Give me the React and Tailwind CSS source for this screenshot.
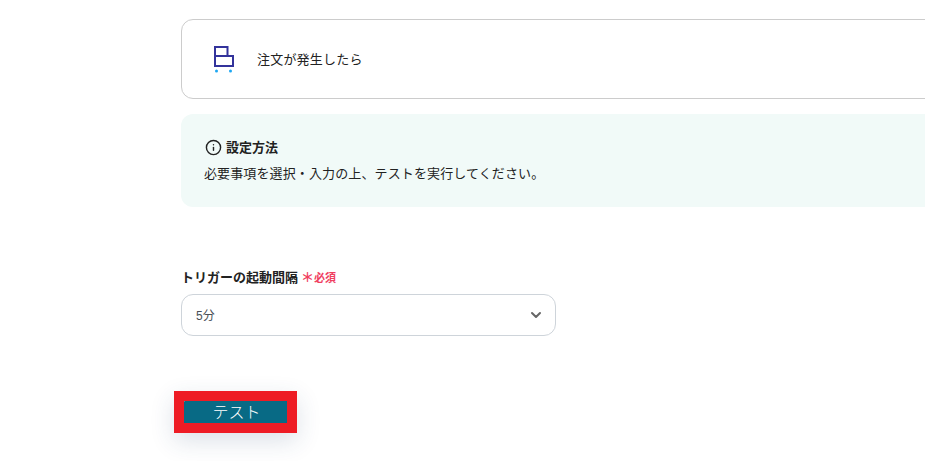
import { ChevronDown, Info } from 'lucide-react';

const font = { jp: 'font-["Liberation_Sans","Noto_Sans_CJK_JP",sans-serif]' };

const OrderIcon = () => (
  <svg width="20" height="28" viewBox="0 0 20 28" fill="none" className="shrink-0">
    <path d="M1 2H13.5V11H1Z" stroke="#33339b" strokeWidth="2" />
    <path d="M1 11H19V21H1Z" stroke="#33339b" strokeWidth="2" />
    <circle cx="2.5" cy="26" r="1.5" fill="#1ea7f2" />
    <circle cx="16.5" cy="26" r="1.5" fill="#1ea7f2" />
  </svg>
);

export default function App() {
  return (
    <div className={`${font.jp} h-[461px] w-[925px] overflow-hidden bg-white pl-[181px] pt-[19px] text-[13px] text-[#222222]`}>
      <div className="w-[1000px]">
        <div className="flex h-20 items-center gap-[23px] rounded-xl border border-[#cccccc] pl-[32px]">
          <OrderIcon />
          <span className="pt-[2px] tracking-[0.2px]">注文が発生したら</span>
        </div>

        <div className="mt-[15px] h-[93px] rounded-xl bg-[#f1faf8] pl-[23px] pt-[24px]">
          <div className="flex items-center gap-[4px] pl-[1px]">
            <Info size={17} strokeWidth={2} className="text-[#222222]" />
            <span className="font-bold">設定方法</span>
          </div>
          <p className="mt-[6px] tracking-[0.12px]">必要事項を選択・入力の上、テストを実行してください。</p>
        </div>

        <div className="mt-[60px] flex h-5 items-center pt-[2px]">
          <span className="font-bold">トリガーの起動間隔</span>
          <span className="ml-[3px] text-[13px] font-bold text-[#f0405f]">＊</span>
          <span className="text-[11px] font-bold text-[#f0405f]">必須</span>
        </div>

        <div className="mt-[7px] flex h-[42px] w-[375px] items-center justify-between rounded-xl border border-[#ced4da] pl-[14px] pr-[11px] text-xs text-[#495057]">
          <span className="pt-[2px]">5分</span>
          <ChevronDown size={16} strokeWidth={3} className="text-[#666666]" />
        </div>

        <div className="relative -ml-[7px] mt-[55px] h-[42px] w-[123px] border-10 border-[#ee1c25] bg-white shadow-[0_8px_24px_rgba(40,70,110,0.16)]">
          <button className="flex h-full w-full items-center justify-center rounded-tl-[1px] bg-[#086a85] pl-[2px] pt-[2px] text-base font-light text-white">
            テスト
          </button>
        </div>
      </div>
    </div>
  );
}
